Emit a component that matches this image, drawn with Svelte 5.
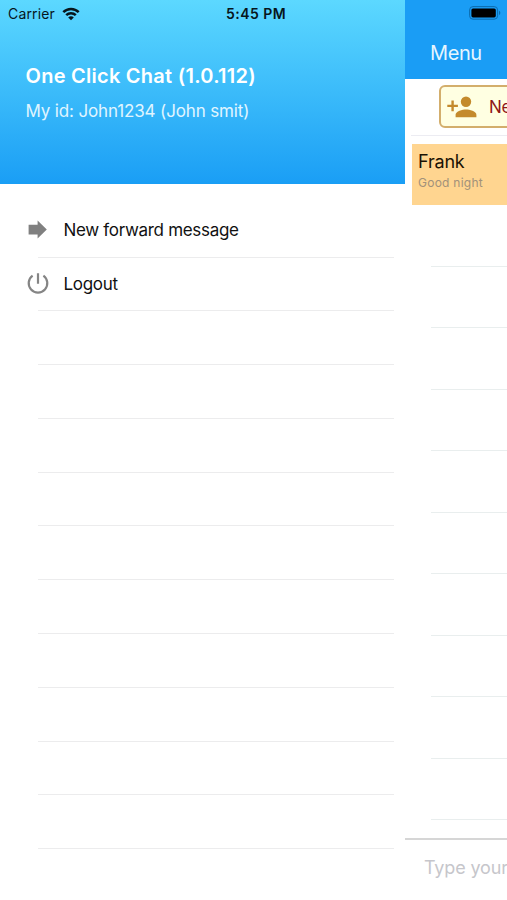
<script lang="ts">
	interface MenuItem {
		label: string;
		icon: 'forward' | 'power';
	}

	const menu: MenuItem[] = [
		{ label: 'New forward message', icon: 'forward' },
		{ label: 'Logout', icon: 'power' }
	];
	const emptyMenuRows = Array.from({ length: 10 });
	const emptyChatRows = Array.from({ length: 10 });
</script>

<div class="screen">
	<div class="status">
		<span class="carrier">Carrier</span>
		<svg class="wifi" viewBox="0 0 18 14" width="18" height="14">
			<g fill="none" stroke="#07161c" stroke-width="2.5">
				<path d="M1.3 5.1C5.6 .9 12.4 .9 16.7 5.1" />
				<path d="M4.2 8.2c2.7-2.6 6.9-2.6 9.6 0" />
			</g>
			<path fill="#07161c" d="M9 13.2 6.2 10.4c1.6-1.5 4-1.5 5.6 0z" />
		</svg>
		<span class="time">5:45 PM</span>
		<svg class="battery" viewBox="0 0 32 14" width="32" height="14">
			<rect x=".6" y=".6" width="28" height="12.6" rx="3.4" fill="none" stroke="#0c6cae" />
			<rect x="2.4" y="2.4" width="24.4" height="9" rx="1.6" fill="#000" />
			<path d="M30 4.8c1.8.6 1.8 3.6 0 4.2z" fill="#0c6cae" />
		</svg>
	</div>

	<aside class="drawer">
		<header class="profile">
			<h1>One Click Chat (1.0.112)</h1>
			<p>My id: John1234 (John smit)</p>
		</header>
		<ul class="menu">
			{#each menu as item}
				<li>
					{#if item.icon === 'forward'}
						<svg viewBox="0 0 24 24" width="24" height="24">
							<path d="M2.6 6.8h9V2.6l9.2 9-9.2 9v-4.2h-9z" fill="#808080" />
						</svg>
					{:else}
						<svg viewBox="0 0 24 24" width="24" height="24">
							<path
								d="M12 1.2v10.6M6.6 3.7a9.3 9.3 0 1 0 10.8 0"
								fill="none"
								stroke="#858585"
								stroke-width="2.2"
							/>
						</svg>
					{/if}
					<span>{item.label}</span>
				</li>
			{/each}
			{#each emptyMenuRows as _}
				<li></li>
			{/each}
		</ul>
	</aside>

	<main class="chat">
		<nav><span>Menu</span></nav>
		<div class="toolbar">
			<button>
				<svg viewBox="0 0 30 22" width="30" height="22">
					<circle cx="19" cy="5.8" r="5.2" fill="#c48a2c" />
					<path d="M8.6 21.3v-2.6c0-3.5 6.9-5.3 10.4-5.3s10.4 1.8 10.4 5.3v2.6z" fill="#c48a2c" />
					<path d="M5.6 4.6v10.6M.3 9.9h10.6" stroke="#c48a2c" stroke-width="2.4" />
				</svg>
				<span>New</span>
			</button>
		</div>
		<section class="conversations">
			<div class="contact">
				<strong>Frank</strong>
				<small>Good night</small>
			</div>
			{#each emptyChatRows as _}
				<div class="slot"></div>
			{/each}
		</section>
		<footer><span>Type your</span></footer>
	</main>
</div>

<style>
	:global(body) {
		background: #fff;
	}

	.screen {
		position: relative;
		display: flex;
		width: 507px;
		height: 900px;
		overflow: hidden;
		background: #fff;
		font-family: Inter, 'Liberation Sans', sans-serif;
		white-space: nowrap;
	}

	.status {
		position: absolute;
		inset: 0 0 auto;
		z-index: 2;
		display: flex;
		align-items: center;
		height: 27px;
		padding: 0 6px 0 8px;
		box-sizing: border-box;
		font-size: 14px;
		color: #07161c;
	}

	.carrier {
		width: 54px;
		letter-spacing: 0.15px;
	}

	.time {
		margin-left: 146px;
		font-weight: 600;
		letter-spacing: 0.45px;
	}

	.battery {
		margin-left: auto;
		margin-top: -1px;
	}

	.drawer {
		flex: none;
		width: 405px;
	}

	.profile {
		height: 184px;
		padding: 63px 0 0 25.5px;
		box-sizing: border-box;
		background: linear-gradient(#5cd8ff, #1a9ef5);
		color: #fff;
	}

	h1 {
		margin: 0;
		font-size: 20px;
		line-height: 26px;
		font-weight: 600;
		letter-spacing: 0.26px;
	}

	p {
		margin: 11px 0 0;
		font-size: 17px;
		line-height: 22px;
		letter-spacing: -0.14px;
		color: #e0f5ff;
	}

	.menu {
		margin: 0;
		padding: 20px 11.5px 0 25.5px;
		list-style: none;
	}

	li {
		display: flex;
		align-items: center;
		gap: 14px;
		height: 53.8px;
		padding-bottom: 2px;
		box-sizing: border-box;
		background: linear-gradient(#ececed, #ececed) 12px 100% / 100% 1.3px no-repeat;
		font-size: 17px;
		letter-spacing: -0.31px;
		color: #111;
	}

	.chat {
		flex: none;
		display: flex;
		flex-direction: column;
		width: 102px;
		overflow: hidden;
	}

	nav {
		height: 79px;
		padding: 39px 0 0 25px;
		box-sizing: border-box;
		background: #1a9df5;
		color: #e6f5ff;
		font-size: 20px;
		line-height: 28px;
		letter-spacing: -0.4px;
	}

	.toolbar {
		height: 57px;
		margin-left: 6px;
		padding: 6px 0 0 28px;
		box-sizing: border-box;
		border-bottom: 1px solid #ececf2;
	}

	button {
		display: flex;
		align-items: center;
		gap: 12px;
		width: 160px;
		height: 43px;
		padding: 0 0 0 6px;
		border: 2px solid #d3ae6c;
		border-radius: 6px;
		background: #ffffe2;
		color: #8e1717;
		font: inherit;
		font-size: 17px;
		letter-spacing: -0.3px;
	}

	.conversations {
		padding: 8px 0 0 6.5px;
	}

	.contact {
		display: flex;
		flex-direction: column;
		height: 61px;
		margin-bottom: 0.5px;
		padding: 6px 0 0 6.5px;
		box-sizing: border-box;
		background: #ffd590;
	}

	strong {
		font-size: 18px;
		line-height: 23px;
		font-weight: 400;
		letter-spacing: -0.2px;
		color: #1a1204;
	}

	small {
		font-size: 12px;
		line-height: 19px;
		letter-spacing: 0.25px;
		color: #a2917a;
	}

	.slot {
		height: 61.5px;
		background: linear-gradient(#e9eeee, #e9eeee) 19.5px 100% / 100% 1.4px no-repeat;
	}

	footer {
		flex: 1;
		margin-top: auto;
		max-height: 62px;
		padding: 16px 0 0 19px;
		box-sizing: border-box;
		border-top: 2px solid #d6d6d6;
		font-size: 18px;
		line-height: 24px;
		letter-spacing: -0.15px;
		color: #c6c6cb;
	}
</style>
